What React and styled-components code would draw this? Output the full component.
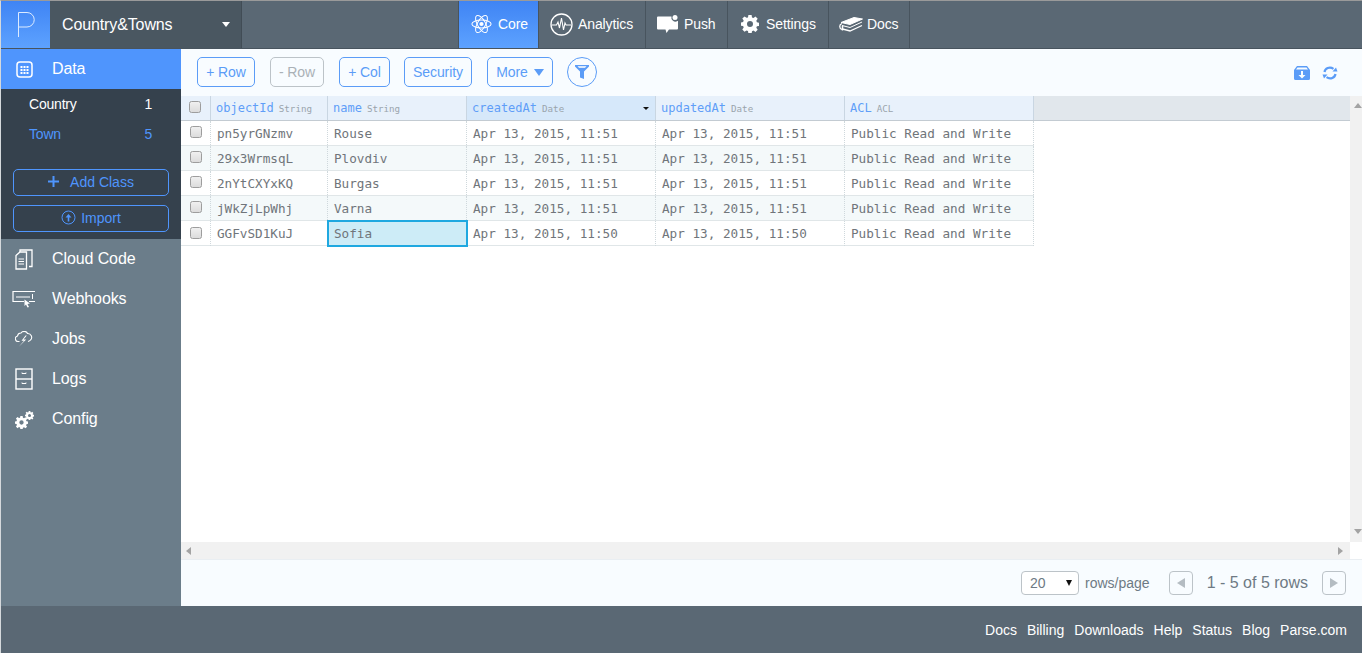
import React from 'react';
import styled, { createGlobalStyle } from 'styled-components';

const Global = createGlobalStyle`
  html, body { margin: 0; height: 100%; overflow: hidden; background: #fff; }
  body { font-family: "Liberation Sans", Arial, sans-serif; }
  * { box-sizing: border-box; }
`;

const Page = styled.div`
  height: 653px;
  display: flex;
  flex-direction: column;
  border-top: 1px solid #9a9a9a;
  border-left: 1px solid #d5d9dc;
`;

const TopBar = styled.header`
  height: 48px;
  flex: none;
  display: flex;
  background: #5a6874;
  border-bottom: 1px solid #48545e;
`;

const LogoBox = styled.div`
  width: 49px;
  display: flex;
  align-items: center;
  justify-content: center;
  background: linear-gradient(to bottom, #3f84f4, #5da2ff);
`;

const AppPicker = styled.div`
  width: 192px;
  display: flex;
  align-items: center;
  justify-content: space-between;
  padding: 0 11px 0 12px;
  background: #4a5761;
  border-right: 1px solid #414c55;
  color: #fff;
  font-size: 16px;
  letter-spacing: -0.12px;
`;

const DownCaret = styled.span`
  width: 0;
  height: 0;
  border-left: ${p => p.$half || 4}px solid transparent;
  border-right: ${p => p.$half || 4}px solid transparent;
  border-top: ${p => p.$h || 5}px solid ${p => p.$color || '#fff'};
`;

const Tabs = styled.nav`
  display: flex;
  margin-left: 216px;
  border-left: 1px solid #48545e;
`;

const Tab = styled.div`
  display: flex;
  align-items: center;
  gap: ${p => p.$gap || 6}px;
  width: ${p => p.$w}px;
  padding: 0 0 1px ${p => p.$pad || 10}px;
  color: #fff;
  font-size: 14px;
  letter-spacing: -0.1px;
  border-right: 1px solid #48545e;
  background: ${p => p.$active ? 'linear-gradient(to bottom, #3f84f4, #5da2ff)' : 'transparent'};
`;

const Body = styled.div`
  flex: 1;
  min-height: 0;
  display: flex;
`;

const Sidebar = styled.aside`
  width: 180px;
  flex: none;
  background: #6b7d8a;
`;

const SideActive = styled.div`
  height: 40px;
  display: flex;
  align-items: center;
  background: #4f95fd;
  color: #fff;
  font-size: 16px;
  letter-spacing: -0.1px;
`;

const SideIconSlot = styled.span`
  width: 51px;
  display: flex;
  justify-content: center;
  padding-right: 5px;
`;

const ClassPanel = styled.div`
  height: 150px;
  background: #35414d;
  padding: 0 12px;
`;

const ClassList = styled.div`
  padding: 0 17px 0 16px;
  height: 80px;
`;

const ClassRow = styled.div`
  height: 30px;
  display: flex;
  justify-content: space-between;
  align-items: center;
  color: ${p => p.$active ? '#fff' : '#4f95fd'};
  font-size: 14px;
  letter-spacing: -0.2px;
`;

const PanelButton = styled.div`
  height: 27px;
  margin-bottom: 9px;
  padding-bottom: 2px;
  display: flex;
  align-items: center;
  justify-content: center;
  gap: ${p => p.$gap}px;
  border: 1px solid #4f95fd;
  border-radius: 5px;
  color: #4f95fd;
  font-size: 14px;
`;

const SideItem = styled.div`
  height: 40px;
  display: flex;
  align-items: center;
  color: #fff;
  font-size: 16px;
  letter-spacing: -0.1px;
`;

const Main = styled.main`
  flex: 1;
  min-width: 0;
  display: flex;
  flex-direction: column;
  background: #fff;
`;

const Toolbar = styled.div`
  height: 47px;
  flex: none;
  display: flex;
  align-items: center;
  padding: 0 16px 1px;
  background: #f8fcff;
`;

const ToolButton = styled.div`
  width: ${p => p.$w}px;
  height: 30px;
  margin-right: ${p => p.$mr}px;
  display: flex;
  align-items: center;
  justify-content: center;
  gap: 6px;
  border: 1px solid ${p => p.$off ? '#bcc3c8' : '#5b9cf7'};
  border-radius: 5px;
  color: ${p => p.$off ? '#aab1b7' : '#5b9cf7'};
  font-size: 14px;
  letter-spacing: -0.1px;
`;

const FilterButton = styled.div`
  width: 30px;
  height: 30px;
  display: flex;
  align-items: center;
  justify-content: center;
  border: 1px solid #5b9cf7;
  border-radius: 50%;
`;

const ToolIcons = styled.div`
  margin: 1px 0 0 auto;
  display: flex;
  align-items: center;
  gap: 12px;
  padding-right: 8px;
`;

const TableArea = styled.div`
  flex: 1;
  min-height: 0;
  display: grid;
  grid-template-columns: 1fr 12px;
  grid-template-rows: 1fr 17px;
`;

const TableWrap = styled.div`
  min-width: 0;
  overflow: hidden;
`;

const Row = styled.div`
  display: grid;
  grid-template-columns: 30px 117px 139px 189px 189px 189px;
  width: ${p => p.$head ? '100%' : '853px'};
  height: 25px;
  background: ${p => p.$head ? '#e1e7ec' : p.$alt ? '#f4f9fa' : '#fff'};
  border-bottom: 1px solid ${p => p.$head ? '#c3cbd2' : '#e0e6e8'};
`;

const HeadCell = styled.div`
  display: flex;
  align-items: center;
  gap: 5px;
  padding-left: 5px;
  position: relative;
  background: ${p => p.$sorted ? '#d6e8fa' : '#e8f1fb'};
  border-right: 1px solid #c9d6e2;
  font-family: "DejaVu Sans Mono", monospace;
  font-size: 12px;
  color: #5f9ef8;
`;

const HeadType = styled.span`
  font-size: 9.2px;
  color: #9aa4ac;
`;

const SortCaret = styled.span`
  position: absolute;
  right: 6px;
  top: 11px;
  width: 0;
  height: 0;
  border-left: 3px solid transparent;
  border-right: 3px solid transparent;
  border-top: 3px solid #111;
`;

const Cell = styled.div`
  display: flex;
  align-items: center;
  padding-left: 6px;
  border-right: 1px dotted #cfd8dc;
  font-family: "DejaVu Sans Mono", monospace;
  font-size: 12.67px;
  color: #70757a;
  white-space: nowrap;
`;

const SelectedCell = styled(Cell)`
  background: #cdecf7;
  outline: 2px solid #1fa8e0;
  outline-offset: -1px;
  height: 25px;
  position: relative;
`;

const CheckCell = styled.div`
  display: flex;
  align-items: center;
  justify-content: center;
  padding: ${p => p.$head ? '0 1px 2px 0' : '0 0 2px 1px'};
  background: ${p => p.$head ? '#e8f1fb' : 'transparent'};
  border-right: ${p => p.$head ? '1px solid #c9d6e2' : '1px dotted #cfd8dc'};
`;

const Check = styled.span`
  width: 12px;
  height: 12px;
  border-radius: 2.5px;
  border: 1px solid #9d9d9d;
  background: linear-gradient(to bottom, #f0f0f0, #dcdcdc);
`;

const VScroll = styled.div`
  display: flex;
  flex-direction: column;
  justify-content: space-between;
  align-items: center;
  padding: 7px 0 8px 4px;
  background: #f1f1f1;
`;

const HScroll = styled.div`
  display: flex;
  justify-content: space-between;
  align-items: center;
  padding: 0 7px 0 5px;
  background: #f1f1f1;
`;

const ArrowV = styled.span`
  width: 0;
  height: 0;
  border-left: 4px solid transparent;
  border-right: 4px solid transparent;
  ${p => p.$up ? 'border-bottom: 5px solid #a3a3a3;' : 'border-top: 5px solid #a3a3a3;'}
`;

const ArrowH = styled.span`
  width: 0;
  height: 0;
  border-top: ${p => p.$half || 4}px solid transparent;
  border-bottom: ${p => p.$half || 4}px solid transparent;
  ${p => p.$left
    ? `border-right: ${p.$w || 5}px solid ${p.$c || '#a3a3a3'};`
    : `border-left: ${p.$w || 5}px solid ${p.$c || '#a3a3a3'};`}
`;

const Corner = styled.div`
  background: #fff;
`;

const Pager = styled.div`
  height: 47px;
  flex: none;
  display: flex;
  align-items: center;
  justify-content: flex-end;
  padding-right: 16px;
  background: #f8fcff;
  border-top: 1px solid #e9eef2;
  color: #6e7a84;
`;

const PageSelect = styled.div`
  width: 58px;
  height: 24px;
  display: flex;
  align-items: center;
  justify-content: space-between;
  padding: 0 6px 0 8px;
  border: 1px solid #bcc3c8;
  border-radius: 4px;
  background: #fff;
  font-size: 14px;
`;

const PagerLabel = styled.span`
  font-size: 14px;
  margin-left: 6px;
  margin-right: 19px;
`;

const PageButton = styled.div`
  width: 24px;
  height: 24px;
  display: flex;
  align-items: center;
  justify-content: center;
  border: 1px solid #bcc3c8;
  border-radius: 4px;
`;

const RangeText = styled.span`
  font-size: 16px;
  margin: 0 14px;
`;

const Footer = styled.footer`
  height: 47px;
  flex: none;
  display: flex;
  justify-content: flex-end;
  align-items: center;
  gap: 10px;
  padding: 0 15px 0 0;
  background: #5a6874;
  color: #fff;
  font-size: 14px;
`;

const Ico = styled.svg`
  display: block;
  flex: none;
`;

const white = '#fff';
const gearPath = 'M7.400 0h3.200l.4 2.400 1.500.6 2-1.400 2.200 2.200-1.400 2 .6 1.500 2.100.4v3.200l-2.100.4-.6 1.500 1.400 2-2.200 2.200-2-1.400-1.500.6-.4 2.300H7.400L7 16l-1.500-.6-2 1.400-2.200-2.200 1.400-2-.6-1.500-2.100-.4V7.500l2.100-.4.6-1.500-1.400-2 2.200-2.200 2 1.400L7 2.400zM9 6a3 3 0 1 0 0 6 3 3 0 0 0 0-6z';

const ParseP = () => (
  <Ico width="18" height="25" viewBox="0 0 18 25" fill="none" stroke="#dcebff" strokeWidth="1">
    <path d="M1.500 25V.5h8.500a7.200 7.200 0 0 1 0 14.500H1.500" />
  </Ico>
);

const AtomIcon = () => (
  <Ico width="21" height="24" viewBox="0 0 24 26" fill="none" stroke={white} strokeWidth="1.2">
    <ellipse cx="12" cy="13" rx="11" ry="4.6" transform="rotate(60 12 13)" />
    <ellipse cx="12" cy="13" rx="11" ry="4.6" transform="rotate(-60 12 13)" />
    <ellipse cx="12" cy="13" rx="11" ry="4.6" />
    <circle cx="12" cy="13" r="2.4" fill={white} stroke="none" />
  </Ico>
);

const PulseIcon = () => (
  <Ico width="23" height="23" viewBox="0 0 23 23" fill="none" stroke={white}>
    <circle cx="11.500" cy="11.500" r="10.500" strokeWidth="1.300" />
    <path d="M1.500 12h5l1.500-3 1.500 6 2-10 2 12 1.500-7 1 2h5" strokeWidth="1.100" />
  </Ico>
);

const PushIcon = () => (
  <Ico width="22" height="19" viewBox="0 0 22 19" fill={white}>
    <path d="M0 2.500a1 1 0 0 1 1-1h13.500a4 4 0 0 0 6 4.500h.5v7.500a1 1 0 0 1-1 1h-8l-2.500 3.500-1-3.500H1a1 1 0 0 1-1-1z" />
    <circle cx="18" cy="2.600" r="2.500" />
  </Ico>
);

const GearIcon = () => (
  <Ico width="18" height="18" viewBox="0 0 18 18" fill={white}>
    <path fillRule="evenodd" d={gearPath} />
  </Ico>
);

const BookIcon = () => (
  <Ico width="24" height="15" viewBox="0 0 24 15" fill="none" stroke={white}>
    <path d="M2 5.500 15 .5l8.500 1.500L11 7.500z" fill={white} />
    <path d="M23 5 11 10.500 3 8.500" strokeWidth="1" />
    <path d="M23 8.500 11 14 3.500 12M3 6.500c-3 1-3 5 0 6" strokeWidth="1.300" />
    <path d="M3.500 8.500v5" strokeWidth="1.500" />
  </Ico>
);

const CalendarIcon = () => (
  <Ico width="17" height="17" viewBox="0 0 17 17" fill="none">
    <rect x="1" y="1" width="15" height="15" rx="3" stroke={white} strokeWidth="1.500" />
    <path d="M4.500 5h2v2h-2zM7.500 5h2v2h-2zM10.500 5h2v2h-2zM4.500 8h2v2h-2zM7.500 8h2v2h-2zM10.500 8h2v2h-2zM4.500 11h2v2h-2zM7.500 11h2v2h-2zM10.500 11h2v2h-2z" fill={white} />
  </Ico>
);

const DocsIcon = () => (
  <Ico width="18" height="21" viewBox="0 0 18 21" fill="none" stroke={white} strokeWidth="1.300">
    <path d="M1 6.500 5 3h6.500v17H1z" />
    <path d="M5 3V1h7l5 0v16.500h-3" />
    <path d="M3.500 10h5.500M3.500 12.500h5.500M3.500 15h5.500" strokeWidth="1" />
  </Ico>
);

const HookIcon = () => (
  <Ico width="24" height="18" viewBox="0 0 24 18" fill="none" stroke={white}>
    <path d="M12 11.500H1V1.500h22M23 11.500h-6" strokeWidth="1.200" />
    <path d="M4 7h14M20.500 4v5" strokeWidth="1" />
    <path d="M12.500 9.500 18 13.500l-2.500.5 1.500 3-1.500.5-1.500-3-1.500 1.500z" fill={white} stroke="none" />
  </Ico>
);

const JobsIcon = () => (
  <Ico width="18" height="16" viewBox="0 0 18 16" fill="none" stroke={white} strokeWidth="1.100">
    <path d="M4.500 10.500H3.500A2.800 2.800 0 0 1 2.500 5 3.500 3.500 0 0 1 6 2c1-2 5.500-2.500 6.500.5A3.800 3.800 0 0 1 15.500 9c-.7.800-1.500 1.200-2.500 1.500" />
    <path d="M10.500 4.500 6.500 9.800H9L3.800 15.800 11.200 8.600H8.600L11.800 4.500z" fill={white} stroke="none" />
  </Ico>
);

const LogsIcon = () => (
  <Ico width="18" height="22" viewBox="0 0 18 22" fill="none" stroke={white} strokeWidth="1.400">
    <rect x="1" y="1" width="16" height="20" />
    <path d="M1 11h16" />
    <path d="M7 5.500h4M7 15.500h4M7 4.500v1M11 4.500v1M7 14.500v1M11 14.500v1" strokeWidth="1" />
  </Ico>
);

const ConfigIcon = () => (
  <Ico width="19" height="19" viewBox="0 0 19 19">
    <svg x="0" y="6" width="13" height="13" viewBox="0 0 18 18" fill={white}>
      <path fillRule="evenodd" d={gearPath} />
    </svg>
    <svg x="10" y="1" width="9" height="9" viewBox="0 0 18 18" fill={white}>
      <path fillRule="evenodd" d={gearPath} />
    </svg>
  </Ico>
);

const PlusIcon = () => (
  <Ico width="11" height="11" viewBox="0 0 11 11" stroke="#4f95fd" strokeWidth="2">
    <path d="M5.500 0v11M0 5.500h11" />
  </Ico>
);

const UpCircleIcon = () => (
  <Ico width="15" height="15" viewBox="0 0 15 15" fill="none" stroke="#4f95fd">
    <circle cx="7.500" cy="7.500" r="6.500" />
    <path d="M7.500 11.500V6" strokeWidth="1.600" />
    <path d="M4.500 7.500 7.500 4l3 3.500z" fill="#4f95fd" stroke="none" />
  </Ico>
);

const FunnelIcon = () => (
  <Ico width="14" height="14" viewBox="0 0 14 14" fill="#5b9cf7">
    <path d="M0 0h14v1.500L9 6.500V14l-4-1.500v-6L0 1.500z" />
    <path d="M2.500 1h9L10 3H4z" fill="#dbe9fb" />
  </Ico>
);

const ExportIcon = () => (
  <Ico width="16" height="14" viewBox="0 0 16 14">
    <path d="M0 4 3 0h10l3 4v8.500a1.500 1.500 0 0 1-1.500 1.500h-13A1.500 1.500 0 0 1 0 12.500z" fill="#5b9cf7" />
    <path d="M2 3.500 3.500 1.500h9L14 3.500z" fill="#f8fcff" />
    <path d="M7 5h2v4h2.500L8 12.500 4.500 9H7z" fill="#f8fcff" />
  </Ico>
);

const RefreshIcon = () => (
  <Ico width="16" height="14" viewBox="0 0 16 14" fill="none" stroke="#5b9cf7" strokeWidth="2.200">
    <path d="M2.500 6C3 2.500 7.500 0 11.500 2.800" />
    <path d="M13.500 8c-.5 3.500-5 6-9 3.200" />
    <path d="M10.500 5.500h5l-1.500-4z" fill="#5b9cf7" stroke="none" />
    <path d="M5.500 8.500h-5l1.500 4z" fill="#5b9cf7" stroke="none" />
  </Ico>
);

const rows = [
  ['pn5yrGNzmv', 'Rouse', 'Apr 13, 2015, 11:51'],
  ['29x3WrmsqL', 'Plovdiv', 'Apr 13, 2015, 11:51'],
  ['2nYtCXYxKQ', 'Burgas', 'Apr 13, 2015, 11:51'],
  ['jWkZjLpWhj', 'Varna', 'Apr 13, 2015, 11:51'],
  ['GGFvSD1KuJ', 'Sofia', 'Apr 13, 2015, 11:50'],
];

const sideItems = [
  ['Cloud Code', <DocsIcon />],
  ['Webhooks', <HookIcon />],
  ['Jobs', <JobsIcon />],
  ['Logs', <LogsIcon />],
  ['Config', <ConfigIcon />],
];

const columns = [
  ['objectId', 'String'],
  ['name', 'String'],
  ['createdAt', 'Date', true],
  ['updatedAt', 'Date'],
  ['ACL', 'ACL'],
];

export default function App() {
  return (
    <Page>
      <Global />
      <TopBar>
        <LogoBox><ParseP /></LogoBox>
        <AppPicker>Country&amp;Towns <DownCaret /></AppPicker>
        <Tabs>
          <Tab $active $w={80} $pad={12}><AtomIcon /> Core</Tab>
          <Tab $w={107} $pad={11} $gap={5}><PulseIcon /> Analytics</Tab>
          <Tab $w={82} $pad={11} $gap={5}><PushIcon /> Push</Tab>
          <Tab $w={101} $pad={13} $gap={7}><GearIcon /> Settings</Tab>
          <Tab $w={81} $pad={10} $gap={4}><BookIcon /> Docs</Tab>
        </Tabs>
      </TopBar>
      <Body>
        <Sidebar>
          <SideActive><SideIconSlot><CalendarIcon /></SideIconSlot>Data</SideActive>
          <ClassPanel>
            <ClassList>
              <ClassRow $active><span>Country</span><span>1</span></ClassRow>
              <ClassRow><span>Town</span><span>5</span></ClassRow>
            </ClassList>
            <PanelButton $gap={11}><PlusIcon /> Add Class</PanelButton>
            <PanelButton $gap={5}><UpCircleIcon /> Import</PanelButton>
          </ClassPanel>
          {sideItems.map(([label, icon]) => (
            <SideItem key={label}><SideIconSlot>{icon}</SideIconSlot>{label}</SideItem>
          ))}
        </Sidebar>
        <Main>
          <Toolbar>
            <ToolButton $w={58} $mr={15}>+ Row</ToolButton>
            <ToolButton $w={54} $mr={15} $off>- Row</ToolButton>
            <ToolButton $w={51} $mr={14}>+ Col</ToolButton>
            <ToolButton $w={68} $mr={15}>Security</ToolButton>
            <ToolButton $w={66} $mr={14}>More <DownCaret $color="#5b9cf7" $half={5} $h={7} /></ToolButton>
            <FilterButton><FunnelIcon /></FilterButton>
            <ToolIcons><ExportIcon /><RefreshIcon /></ToolIcons>
          </Toolbar>
          <TableArea>
            <TableWrap>
              <Row $head>
                <CheckCell $head><Check /></CheckCell>
                {columns.map(([name, type, sorted]) => (
                  <HeadCell key={name} $sorted={sorted}>
                    {name} <HeadType>{type}</HeadType>
                    {sorted && <SortCaret />}
                  </HeadCell>
                ))}
              </Row>
              {rows.map(([id, name, date], i) => (
                <Row key={id} $alt={i % 2 === 1}>
                  <CheckCell><Check /></CheckCell>
                  <Cell>{id}</Cell>
                  {i === 4 ? <SelectedCell>{name}</SelectedCell> : <Cell>{name}</Cell>}
                  <Cell>{date}</Cell>
                  <Cell>{date}</Cell>
                  <Cell>Public Read and Write</Cell>
                </Row>
              ))}
            </TableWrap>
            <VScroll><ArrowV $up /><ArrowV /></VScroll>
            <HScroll><ArrowH $left /><ArrowH /></HScroll>
            <Corner />
          </TableArea>
          <Pager>
            <PageSelect>20 <DownCaret $color="#111" $half={3} $h={6} /></PageSelect>
            <PagerLabel>rows/page</PagerLabel>
            <PageButton><ArrowH $left $w={8} $half={5} $c="#b4bcc2" /></PageButton>
            <RangeText>1 - 5 of 5 rows</RangeText>
            <PageButton><ArrowH $w={8} $half={5} $c="#b4bcc2" /></PageButton>
          </Pager>
        </Main>
      </Body>
      <Footer>
        <span>Docs</span><span>Billing</span><span>Downloads</span><span>Help</span><span>Status</span><span>Blog</span><span>Parse.com</span>
      </Footer>
    </Page>
  );
}
